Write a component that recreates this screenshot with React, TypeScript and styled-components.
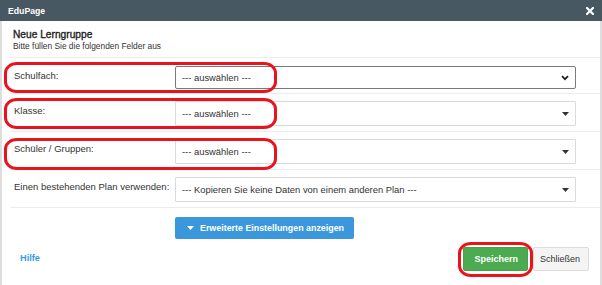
import React from "react";
import styled, { createGlobalStyle } from "styled-components";

const Global = createGlobalStyle`
  html, body { margin: 0; padding: 0; background: #ffffff; }
  body { font-family: "Liberation Sans", Arial, sans-serif; }
  * { box-sizing: border-box; }
`;

const Dialog = styled.div`
  width: 602px;
  height: 285px;
  overflow: hidden;
  display: flex;
  flex-direction: column;
  background: #fff;
`;

const Header = styled.div`
  height: 21px;
  flex: none;
  background: #485862;
  display: flex;
  align-items: center;
  justify-content: space-between;
  padding: 0 8px 0 8px;
  color: #fff;
`;

const HeaderTitle = styled.span`
  font-weight: bold;
  font-size: 8.7px;
  line-height: 10px;
  margin-top: 1px;
`;

const Close = styled.span`
  display: flex;
  width: 8px;
  height: 8px;
  margin-top: 1px;
`;

const Body = styled.div`
  position: relative;
  flex: 1;
  border-left: 2px solid #dedede;
  border-right: 2px solid #dedede;
  padding-left: 8px;
  display: flex;
  flex-direction: column;
`;

const Heading = styled.div`
  padding: 8px 0 5px 3px;
  border-bottom: 1px solid #ececec;
  display: flex;
  flex-direction: column;
`;

const Title = styled.div`
  font-size: 10.2px;
  line-height: 12px;
  color: #1e1e1e;
  -webkit-text-stroke: 0.35px #1e1e1e;
`;

const Subtitle = styled.div`
  font-size: 8.4px;
  line-height: 11px;
  color: #333;
`;

const Row = styled.div<{ $first?: boolean }>`
  display: flex;
  align-items: flex-start;
  padding: ${(p) => (p.$first ? "8px 24px 4px 4px" : "7px 24px 5px 4px")};
  border-bottom: 1px solid #ececec;
`;

const Label = styled.div`
  width: 161px;
  flex: none;
  font-size: 9.5px;
  line-height: 12px;
  padding-top: 4px;
  color: #333;
`;

const SelectBox = styled.div<{ $focused?: boolean }>`
  flex: 1;
  height: ${(p) => (p.$focused ? "23px" : "25px")};
  border: 1px solid ${(p) => (p.$focused ? "#7a7a7a" : "#dadada")};
  border-radius: ${(p) => (p.$focused ? "2px" : "1px")};
  display: flex;
  align-items: center;
  justify-content: space-between;
  padding: 0 6px 0 6px;
  font-size: 9.4px;
  color: #333;
  background: #fff;
`;

const AdvancedRow = styled.div`
  padding: 9px 0 0 165px;
  display: flex;
`;

const BlueButton = styled.div`
  height: 22px;
  background: #3a97dc;
  border-radius: 2px;
  color: #fff;
  font-weight: bold;
  font-size: 8.9px;
  display: flex;
  align-items: center;
  gap: 6px;
  padding: 0 10px 0 12px;
`;

const Footer = styled.div`
  display: flex;
  align-items: center;
  justify-content: space-between;
  padding: 8px 11px 0 10px;
`;

const HelpLink = styled.span`
  color: #3a9be0;
  font-weight: bold;
  font-size: 9.2px;
  margin-top: -3px;
`;

const ButtonGroup = styled.div`
  display: flex;
  gap: 5px;
`;

const Button = styled.div<{ $variant: "success" | "default" }>`
  height: 24px;
  display: flex;
  align-items: center;
  font-size: 9px;
  border-radius: 2px;
  ${(p) =>
    p.$variant === "success"
      ? `background: #4cab50; color: #fff; font-weight: bold; padding: 0 9px 0 10px; border: 1px solid #46a34a;`
      : `background: #f4f4f4; color: #333; padding: 0 8px 0 6px; border: 1px solid #dcdcdc;`}
`;

const Annotation = styled.div`
  position: absolute;
  border: 3px solid #e8131d;
  border-radius: 13px / 11px;
  pointer-events: none;
`;

const Caret = () => (
  <svg width="7" height="4" viewBox="0 0 7 4">
    <path d="M0 0 H7 L3.5 4 Z" fill="#333" />
  </svg>
);

const Chevron = () => (
  <svg width="8" height="6" viewBox="0 0 8 6">
    <path d="M1 1.2 L4 4.2 L7 1.2" fill="none" stroke="#222" strokeWidth="1.8" />
  </svg>
);

const rows = [
  { label: "Schulfach:", value: "--- auswählen ---", focused: true },
  { label: "Klasse:", value: "--- auswählen ---" },
  { label: "Schüler / Gruppen:", value: "--- auswählen ---" },
  {
    label: "Einen bestehenden Plan verwenden:",
    value: "--- Kopieren Sie keine Daten von einem anderen Plan ---",
  },
];

const annotations = [
  { left: 2, top: 41, width: 273, height: 31 },
  { left: 2, top: 77, width: 273, height: 31 },
  { left: 2, top: 117, width: 273, height: 32 },
  { left: 456, top: 221, width: 75, height: 35 },
];

export default function App() {
  return (
    <>
      <Global />
      <Dialog>
        <Header>
          <HeaderTitle>EduPage</HeaderTitle>
          <Close>
            <svg width="8" height="8" viewBox="0 0 8 8">
              <path d="M1 1 L7 7 M7 1 L1 7" stroke="#fff" strokeWidth="2.2" strokeLinecap="square" />
            </svg>
          </Close>
        </Header>
        <Body>
          <Heading>
            <Title>Neue Lerngruppe</Title>
            <Subtitle>Bitte füllen Sie die folgenden Felder aus</Subtitle>
          </Heading>
          {rows.map((r, i) => (
            <Row key={r.label} $first={i === 0}>
              <Label>{r.label}</Label>
              <SelectBox $focused={r.focused}>
                <span>{r.value}</span>
                {r.focused ? <Chevron /> : <Caret />}
              </SelectBox>
            </Row>
          ))}
          <AdvancedRow>
            <BlueButton>
              <svg width="7" height="4" viewBox="0 0 7 4">
                <path d="M0 0 H7 L3.5 4 Z" fill="#fff" />
              </svg>
              Erweiterte Einstellungen anzeigen
            </BlueButton>
          </AdvancedRow>
          <Footer>
            <HelpLink>Hilfe</HelpLink>
            <ButtonGroup>
              <Button $variant="success">Speichern</Button>
              <Button $variant="default">Schließen</Button>
            </ButtonGroup>
          </Footer>
          {annotations.map((a, i) => (
            <Annotation key={i} style={a} />
          ))}
        </Body>
      </Dialog>
    </>
  );
}
